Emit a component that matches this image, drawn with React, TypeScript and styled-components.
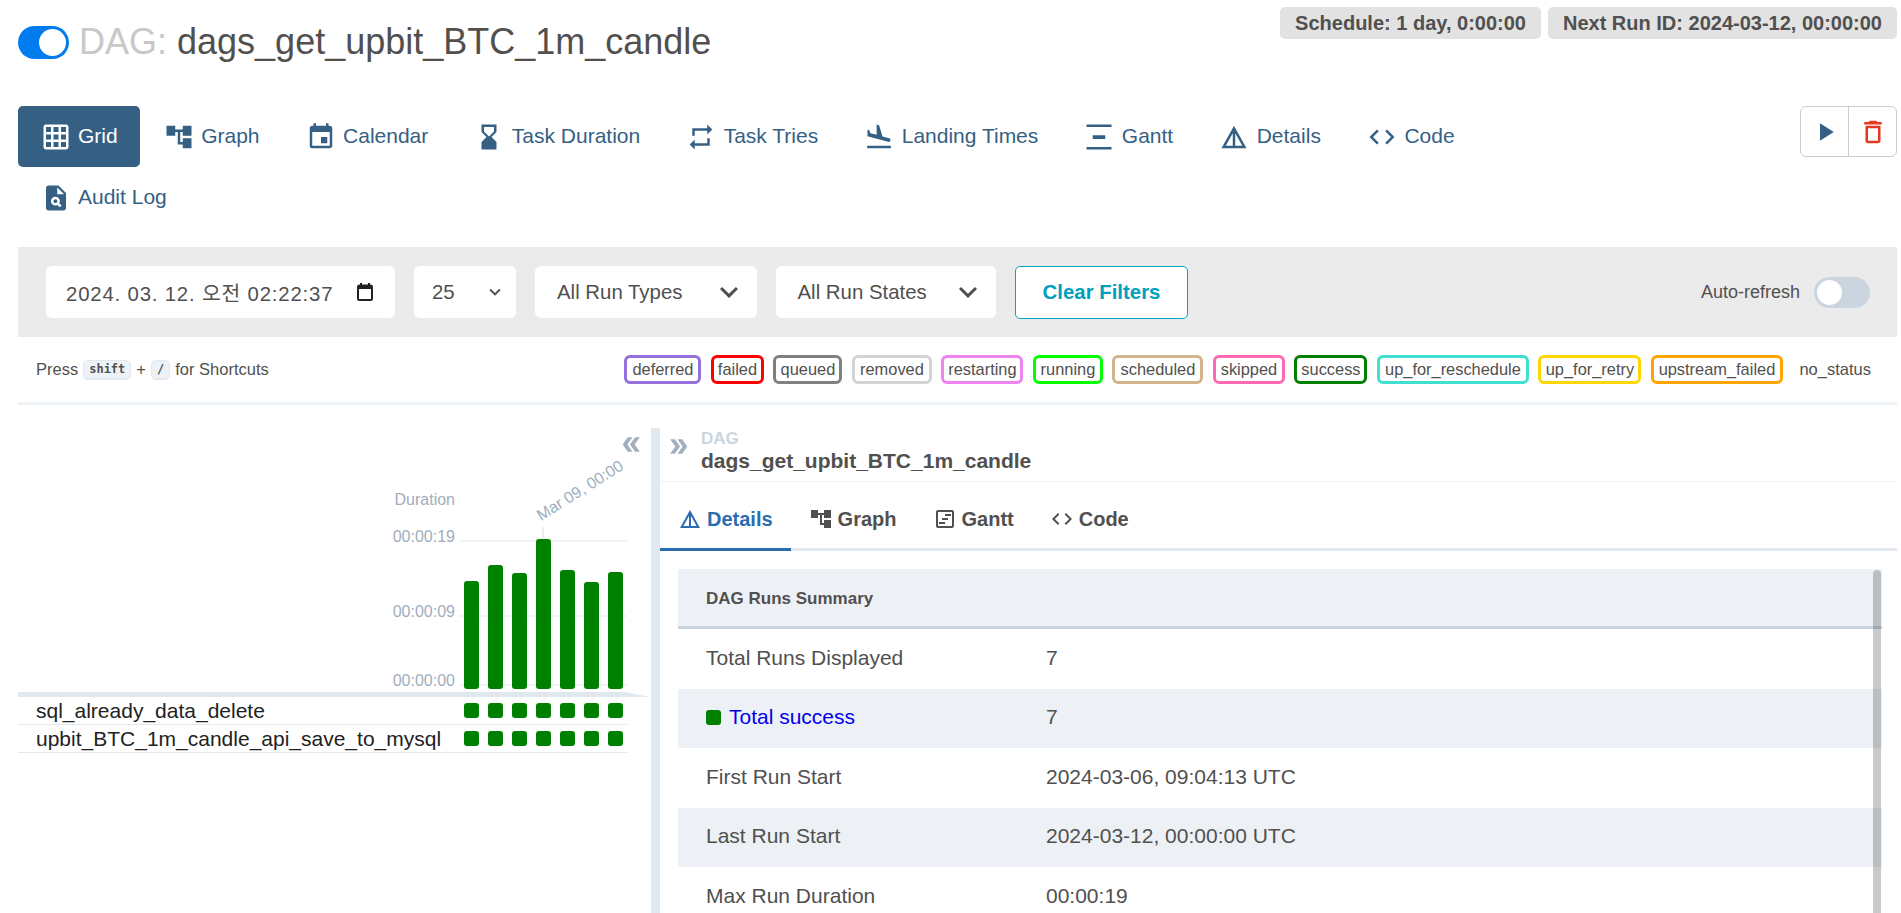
import React from "react";
import styled, { createGlobalStyle } from "styled-components";
import {
  MdGridOn, MdAccountTree, MdEvent, MdHourglassBottom, MdRepeat, MdFlightLand, MdVerticalDistribute,
  MdDetails, MdCode, MdPlagiarism, MdPlayArrow, MdDeleteOutline, MdKeyboardArrowDown, MdDoubleArrow, MdOutlineViewTimeline,
} from "react-icons/md";

const Global = createGlobalStyle`
  html, body { margin: 0; padding: 0; background: #fff; overflow: hidden; }
  body { font-family: "Liberation Sans", Arial, sans-serif; color: #51504f; }
  * { box-sizing: border-box; }
`;

const Page = styled.div`
  width: 1901px; height: 913px; overflow: hidden; padding: 0 4px 0 18px;
`;
const Header = styled.div`
  height: 106px; display: flex; justify-content: space-between; align-items: flex-start;
`;
const TitleWrap = styled.div`
  display: flex; align-items: center; margin-top: 20px; gap: 10px;
`;
const Toggle = styled.div`
  width: 51px; height: 33px; border-radius: 17px; background: #017cee; position: relative; flex: none;
  &::after { content: ""; position: absolute; top: 3px; right: 3px; width: 27px; height: 27px; border-radius: 50%; background: #fff; }
`;
const Title = styled.h1`
  margin: 0; font-size: 36px; font-weight: 400; line-height: 44px; color: #51504f;
  span { color: #c8c8c8; }
`;
const Badges = styled.div`
  display: flex; gap: 7px; margin-top: 7px;
`;
const Badge = styled.div`
  height: 32px; line-height: 32px; padding: 0 15px; background: #e2e2e2; border-radius: 5px;
  font-size: 20px; font-weight: 700; color: #51504f; white-space: nowrap;
`;
const NavArea = styled.div`
  display: flex; justify-content: space-between; align-items: flex-start; height: 141px;
`;
const Nav = styled.div`
  display: flex; flex-wrap: wrap; width: 1500px; column-gap: 1px;
`;
const NavItem = styled.div<{ $active?: boolean }>`
  height: 61px; display: flex; align-items: center; gap: 7.5px; padding: 0 22.5px;
  font-size: 21px; border-radius: 5px;
  color: ${(p) => (p.$active ? "#fff" : "#365f84")};
  background: ${(p) => (p.$active ? "#365f84" : "transparent")};
  svg { flex: none; }
`;
const NavLabel = styled.span`
  position: relative; top: -1px;
`;
const ActionGroup = styled.div`
  display: flex; width: 97px; height: 51px; border: 1px solid #ccc; border-radius: 6px;
`;
const ActionButton = styled.div<{ $red?: boolean }>`
  flex: 1; display: flex; align-items: center; justify-content: center;
  color: ${(p) => (p.$red ? "#e43921" : "#365f84")};
  & + & { border-left: 1px solid #ccc; }
`;
const FilterBar = styled.div`
  height: 90px; background: #ebebeb; display: flex; align-items: center; padding: 0 27px 0 28px; gap: 19px;
`;
const DateField = styled.div`
  width: 349px; height: 52px; background: #fff; border-radius: 6px; display: flex; align-items: center;
  justify-content: space-between; padding: 0 22px 0 20px; font-size: 20.4px; flex: none;
`;
const SelectField = styled.div<{ $w: number; $pad: number }>`
  width: ${(p) => p.$w}px; height: 52px; background: #fff; border-radius: 6px; display: flex; align-items: center;
  justify-content: space-between; padding: 0 10px 0 ${(p) => p.$pad}px; font-size: 20.4px; color: #51504f; flex: none;
`;
const DateText = styled.span`
  font-family: "Liberation Sans", "Noto Sans CJK KR", sans-serif; letter-spacing: 0.8px; white-space: pre;
`;
const ClearButton = styled.div`
  width: 173px; height: 53px; border: 1px solid #00a7c4; border-radius: 5px; background: #fff; color: #00a0bd;
  font-size: 20.4px; font-weight: 700; display: flex; align-items: center; justify-content: center;
`;
const AutoRefresh = styled.div`
  margin-left: auto; display: flex; align-items: center; gap: 14px; font-size: 18px;
`;
const OffSwitch = styled.div`
  width: 56px; height: 31px; border-radius: 16px; background: #cbd5e0; position: relative;
  &::after { content: ""; position: absolute; left: 3px; top: 3px; width: 25px; height: 25px; border-radius: 50%; background: #fff; }
`;
const LegendRow = styled.div`
  height: 68px; border-bottom: 3px solid #edf2f7; display: flex; align-items: center; justify-content: space-between;
  padding: 0 26px 0 18px; font-size: 16.5px;
`;
const Hint = styled.div`
  display: flex; align-items: center; gap: 5px;
`;
const Kbd = styled.kbd`
  background: #edf2f7; border: 1px solid #e2e8f0; border-bottom-width: 2px; border-radius: 5px;
  font-family: "DejaVu Sans Mono", monospace; font-size: 12px; font-weight: 700; padding: 0 5px; height: 20px; line-height: 16px;
`;
const Legend = styled.div`
  display: flex; gap: 9.5px; align-items: center;
`;
const State = styled.div<{ $c: string; $w: number }>`
  width: ${(p) => p.$w}px; height: 29px; line-height: 23px; text-align: center; white-space: nowrap;
  border: 3px solid ${(p) => p.$c}; border-radius: 6px; font-size: 16.4px; color: #51504f;
`;
const NoStatus = styled.div`
  margin-left: 7px; font-size: 16.5px;
`;
const Panels = styled.div`
  display: flex; height: 508px; padding-top: 23px;
`;
const LeftPanel = styled.div`
  width: 633px; flex: none; position: relative; height: 100%;
`;
const CollapseLeft = styled.div`
  position: absolute; right: 7.5px; top: 4px; color: #a0aec0; display: flex; transform: rotate(180deg);
`;
const ChartSvg = styled.svg`
  display: block; width: 633px; height: 264px;
`;
const HeadBand = styled.div`
  height: 5px; background: #e2e8f0; width: 632px;
  clip-path: polygon(0 0, 96% 0, 100% 100%, 0 100%);
`;
const TaskRow = styled.div`
  width: 609px; height: 28px; border-bottom: 1.5px solid #e2e8f0; display: flex; align-items: center; justify-content: space-between;
  padding-left: 18px; font-size: 21px; color: #222;
`;
const Squares = styled.div`
  display: flex; gap: 9px; margin-right: 4px;
`;
const Square = styled.div`
  width: 15px; height: 15px; background: #008000; border-radius: 3px;
`;
const Divider = styled.div`
  width: 9px; flex: none; background: #e2e8f0; height: 100%;
`;
const RightPanel = styled.div`
  flex: 1; min-width: 0; position: relative;
`;
const DetailHead = styled.div`
  height: 54px; border-bottom: 1.5px solid #edf2f7; display: flex; padding-left: 6px; gap: 10px;
`;
const CollapseRight = styled.div`
  color: #a0aec0; display: flex; padding-top: 6px; height: 31px;
`;
const Crumb = styled.div`
  small { display: block; font-size: 17px; line-height: 18px; font-weight: 700; color: #cbd5e0; padding-top: 2px; }
  strong { display: block; font-size: 21px; line-height: 26px; font-weight: 700; color: #51504f; }
`;
const Tabs = styled.div`
  height: 69px; border-bottom: 3px solid #e2e8f0; display: flex;
`;
const Tab = styled.div<{ $active?: boolean }>`
  height: 69px; display: flex; align-items: center; gap: 5px; padding: 8px 18px 0;
  font-size: 20px; font-weight: 700; color: ${(p) => (p.$active ? "#2b6cb0" : "#51504f")};
  border-bottom: 3px solid ${(p) => (p.$active ? "#2b6cb0" : "transparent")};
`;
const TableWrap = styled.div`
  position: relative; margin: 18px 15px 0 18px;
`;
const Thead = styled.div`
  height: 60px; background: #edf1f5; border-bottom: 3px solid #cbd5e0; display: flex; align-items: center; padding: 2px 0 0 28px;
  font-size: 17px; font-weight: 700; color: #51504f;
`;
const Row = styled.div<{ $striped?: boolean }>`
  height: 59.5px; display: flex; align-items: center; padding: 0 0 2px 28px; font-size: 21px; color: #51504f;
  background: ${(p) => (p.$striped ? "#edf1f5" : "#fff")};
`;
const Label = styled.div`
  width: 340px; display: flex; align-items: center; gap: 8px;
`;
const Link = styled.span`
  color: #0000ee;
`;
const Dot = styled.span`
  width: 15px; height: 15px; border-radius: 3px; background: #008000;
`;
const ScrollThumb = styled.div`
  position: absolute; right: 1px; top: 1px; bottom: -60px; width: 8px; background: rgba(0, 0, 0, 0.21); border-radius: 4px 4px 0 0;
`;

const nav: [string, React.ReactNode, boolean?][] = [
  ["Grid", <MdGridOn size={30} />, true],
  ["Graph", <MdAccountTree size={30} />],
  ["Calendar", <MdEvent size={30} />],
  ["Task Duration", <MdHourglassBottom size={30} />],
  ["Task Tries", <MdRepeat size={30} />],
  ["Landing Times", <MdFlightLand size={30} />],
  ["Gantt", <MdVerticalDistribute size={30} />],
  ["Details", <MdDetails size={30} />],
  ["Code", <MdCode size={30} />],
  ["Audit Log", <MdPlagiarism size={30} />],
];
const states: [string, string, number][] = [
  ["deferred", "#9370db", 77], ["failed", "#ff0000", 53], ["queued", "#808080", 69], ["removed", "#d3d3d3", 80],
  ["restarting", "#ee82ee", 82], ["running", "#00ff00", 70], ["scheduled", "#d2b48c", 91], ["skipped", "#ff69b4", 72],
  ["success", "#008000", 73], ["up_for_reschedule", "#40e0d0", 152], ["up_for_retry", "#ffd700", 103], ["upstream_failed", "#ffa500", 132],
];
const bars = [108, 124, 116, 150, 119, 107, 117];

const PickerIcon = () => (
  <svg width="16" height="18" viewBox="0 0 16 18" fill="none">
    <rect x="3" y="0" width="2" height="3" fill="#222" />
    <rect x="11" y="0" width="2" height="3" fill="#222" />
    <rect x="1" y="2.5" width="14" height="14.5" rx="1.5" stroke="#222" strokeWidth="2" />
    <rect x="1" y="2" width="14" height="4" fill="#222" />
  </svg>
);

export default function App() {
  return (
    <Page>
      <Global />
      <Header>
        <TitleWrap>
          <Toggle />
          <Title><span>DAG:</span> dags_get_upbit_BTC_1m_candle</Title>
        </TitleWrap>
        <Badges>
          <Badge>Schedule: 1 day, 0:00:00</Badge>
          <Badge>Next Run ID: 2024-03-12, 00:00:00</Badge>
        </Badges>
      </Header>
      <NavArea>
        <Nav>
          {nav.map(([t, icon, a]) => (
            <NavItem key={t} $active={a}>{icon}<NavLabel>{t}</NavLabel></NavItem>
          ))}
        </Nav>
        <ActionGroup>
          <ActionButton><MdPlayArrow size={30} /></ActionButton>
          <ActionButton $red><MdDeleteOutline size={30} /></ActionButton>
        </ActionGroup>
      </NavArea>
      <FilterBar>
        <DateField>
          <DateText>2024. 03. 12. 오전 02:22:37</DateText>
          <PickerIcon />
        </DateField>
        <SelectField $w={102} $pad={18}>25<MdKeyboardArrowDown size={22} /></SelectField>
        <SelectField $w={221.5} $pad={22}>All Run Types<MdKeyboardArrowDown size={36} /></SelectField>
        <SelectField $w={220.5} $pad={22}>All Run States<MdKeyboardArrowDown size={36} /></SelectField>
        <ClearButton>Clear Filters</ClearButton>
        <AutoRefresh>Auto-refresh<OffSwitch /></AutoRefresh>
      </FilterBar>
      <LegendRow>
        <Hint>Press <Kbd>shift</Kbd> + <Kbd>/</Kbd> for Shortcuts</Hint>
        <Legend>
          {states.map(([s, c, w]) => <State key={s} $c={c} $w={w}>{s}</State>)}
          <NoStatus>no_status</NoStatus>
        </Legend>
      </LegendRow>
      <Panels>
        <LeftPanel>
          <CollapseLeft><MdDoubleArrow size={25} /></CollapseLeft>
          <ChartSvg viewBox="0 0 633 264">
            <g fontFamily="Liberation Sans" fontSize="16" fill="#a0aec0" textAnchor="end">
              <text x="437" y="77">Duration</text>
              <text x="437" y="114">00:00:19</text>
              <text x="437" y="189">00:00:09</text>
              <text x="437" y="258">00:00:00</text>
              <text x="522" y="98" textAnchor="start" transform="rotate(-32 514 94)">Mar 09, 00:00</text>
            </g>
            <g stroke="#edf2f7" strokeWidth="1.5">
              <line x1="441" x2="609" y1="113" y2="113" />
              <line x1="441" x2="609" y1="188" y2="188" />
              <line x1="441" x2="609" y1="257" y2="257" />
              <line x1="525" x2="525" y1="99" y2="113" stroke="#e2e8f0" />
            </g>
            {bars.map((h, i) => (
              <rect key={i} x={446 + i * 24} y={261 - h} width="15" height={h} rx="3" fill="#008000" />
            ))}
          </ChartSvg>
          <HeadBand />
          <TaskRow>sql_already_data_delete<Squares>{bars.map((_, i) => <Square key={i} />)}</Squares></TaskRow>
          <TaskRow>upbit_BTC_1m_candle_api_save_to_mysql<Squares>{bars.map((_, i) => <Square key={i} />)}</Squares></TaskRow>
        </LeftPanel>
        <Divider />
        <RightPanel>
          <DetailHead>
            <CollapseRight><MdDoubleArrow size={25} /></CollapseRight>
            <Crumb><small>DAG</small><strong>dags_get_upbit_BTC_1m_candle</strong></Crumb>
          </DetailHead>
          <Tabs>
            <Tab $active><MdDetails size={24} />Details</Tab>
            <Tab><MdAccountTree size={24} />Graph</Tab>
            <Tab><MdOutlineViewTimeline size={24} />Gantt</Tab>
            <Tab><MdCode size={24} />Code</Tab>
          </Tabs>
          <TableWrap>
            <Thead>DAG Runs Summary</Thead>
            <Row><Label>Total Runs Displayed</Label>7</Row>
            <Row $striped><Label><Dot /><Link>Total success</Link></Label>7</Row>
            <Row><Label>First Run Start</Label>2024-03-06, 09:04:13 UTC</Row>
            <Row $striped><Label>Last Run Start</Label>2024-03-12, 00:00:00 UTC</Row>
            <Row><Label>Max Run Duration</Label>00:00:19</Row>
            <ScrollThumb />
          </TableWrap>
        </RightPanel>
      </Panels>
    </Page>
  );
}
